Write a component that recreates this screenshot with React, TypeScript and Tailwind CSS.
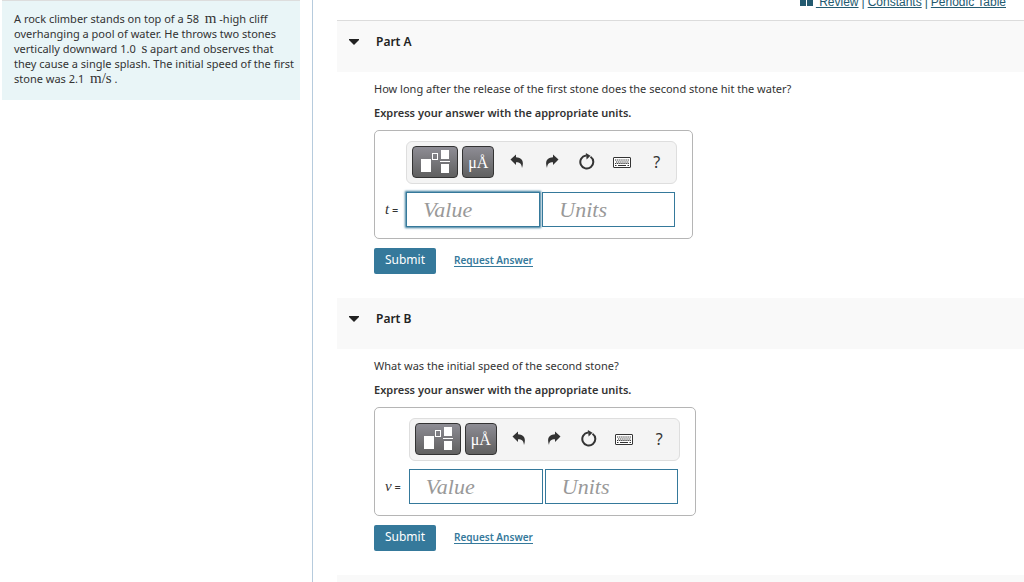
import { ReactNode } from 'react';

interface PartProps {
  title: string;
  question: string;
  variable: string;
  active?: boolean;
  first?: boolean;
}

function TemplatesIcon() {
  return (
    <svg width="30" height="24" viewBox="0 0 30 24" aria-hidden="true">
      <rect x="1" y="9" width="10" height="13" fill="#fff" />
      <rect x="12.5" y="3.5" width="5" height="6" fill="none" stroke="#fff" />
      <rect x="21" y="0" width="8" height="9" fill="#fff" />
      <rect x="20" y="11" width="10" height="1" fill="#fff" />
      <rect x="21" y="14" width="8" height="9" fill="#fff" />
    </svg>
  );
}

function UndoIcon() {
  return (
    <svg width="14" height="16" viewBox="0 0 14 16" aria-hidden="true">
      <path d="M0.5 5.5 L6 0.5 V3.2 C11.5 3.4 14.5 7 12 14 C11.5 9.5 10 8.4 6 8.2 V11 Z" fill="#333" />
    </svg>
  );
}

function RedoIcon() {
  return (
    <svg width="14" height="16" viewBox="0 0 14 16" aria-hidden="true">
      <path d="M13.5 5.5 L8 0.5 V3.2 C2.5 3.4 -0.5 7 2 14 C2.5 9.5 4 8.4 8 8.2 V11 Z" fill="#333" />
    </svg>
  );
}

function ResetIcon() {
  return (
    <svg width="16" height="18" viewBox="0 0 16 18" aria-hidden="true">
      <path d="M11.5 3.7 A6.5 6.5 0 1 1 7 2.6" fill="none" stroke="#333" strokeWidth="2" />
      <path d="M6.8 0 L11.5 2.8 L7.6 6.4 Z" fill="#333" />
    </svg>
  );
}

function KeyboardIcon() {
  return (
    <svg width="18" height="14" viewBox="0 0 18 14" aria-hidden="true">
      <rect x="0.5" y="2.5" width="17" height="10" rx="0.5" fill="#fff" stroke="#333" />
      <path d="M2 5 H16 M3 7 H16" stroke="#333" strokeWidth="1.2" strokeDasharray="1.3 0.8" />
      <path d="M2 8.5 H16" stroke="#333" strokeWidth="1" strokeDasharray="1.3 0.8" />
      <path d="M2 10.5 H3.5 M5 10.5 H13 M14.5 10.5 H16" stroke="#333" strokeWidth="1" />
    </svg>
  );
}

function ToolButton({ label, children }: { label: string; children: ReactNode }) {
  return (
    <button type="button" aria-label={label} className="flex h-8 w-[35px] items-center justify-center text-[#333]">
      {children}
    </button>
  );
}

function Toolbar() {
  return (
    <div className="flex h-[43px] w-[271px] items-start rounded-md border border-[#dedede] bg-[#f4f4f4] pt-1 pl-[5px]">
      <button
        type="button"
        aria-label="Templates"
        className="mr-1 flex h-8 w-[46px] items-center justify-center rounded border border-[#333] bg-linear-to-b from-[#8e8d95] to-[#606060]"
      >
        <TemplatesIcon />
      </button>
      <button
        type="button"
        aria-label="Symbols"
        className="mr-[5px] h-8 w-8 rounded border border-[#333] bg-linear-to-b from-[#8e8d95] to-[#606060] font-['Liberation_Serif',serif] text-[16px] leading-8 text-white"
      >
        μÅ
      </button>
      <ToolButton label="Undo"><UndoIcon /></ToolButton>
      <ToolButton label="Redo"><RedoIcon /></ToolButton>
      <ToolButton label="Reset"><ResetIcon /></ToolButton>
      <ToolButton label="Keyboard shortcuts"><KeyboardIcon /></ToolButton>
      <ToolButton label="Help"><span className="text-base">?</span></ToolButton>
    </div>
  );
}

function PartHeader({ title, first }: { title: string; first?: boolean }) {
  return (
    <h2 className={first ? 'border-t border-[#dcdcdc] bg-[#f9f9f9]' : 'bg-[#f9f9f9]'}>
      <button type="button" className="flex h-[51px] w-full items-start pt-3 pl-3 text-[12px] leading-[18px] font-semibold text-[#222]">
        <svg width="10" height="6" viewBox="0 0 10 6" className="mt-1.5 mr-[17px]" aria-hidden="true">
          <path d="M0 0 H10 V1 L5 6 L0 1 Z" fill="#222" />
        </svg>
        {title}
      </button>
    </h2>
  );
}

function Part({ title, question, variable, active, first }: PartProps) {
  const field =
    "h-[35px] border border-[#35799b] bg-white pl-4 font-['Liberation_Serif',serif] text-[22px] italic outline-none placeholder:text-[#999]";

  return (
    <section>
      <PartHeader title={title} first={first} />
      <div className="pt-2 pb-6 pl-[37px]">
        <p className="text-[11px] leading-[18px]">{question}</p>
        <p className="mt-1.5 text-[11px] leading-[18px] font-semibold">Express your answer with the appropriate units.</p>
        <div className="mt-2 flex h-[109px] w-fit items-start rounded-[5px] border border-[#b5b5b5] pt-2.5 pr-[15px] pl-2.5">
          <label htmlFor={`${variable}-value`} className="mt-[59px] mr-2 text-[11px] leading-[18px]">
            <span className="font-['Liberation_Serif',serif] text-[15px] italic">{variable}</span> =
          </label>
          <div>
            <Toolbar />
            <div className="mt-2 flex gap-0.5">
              <input
                id={`${variable}-value`}
                type="text"
                placeholder="Value"
                className={`${field} w-[134px] ${active ? 'shadow-[0_0_2px_1px_#35799b]' : ''}`}
              />
              <input type="text" aria-label="Units" placeholder="Units" className={`${field} w-[133px]`} />
            </div>
          </div>
        </div>
        <div className="mt-[9px] flex items-start">
          <button type="button" className="h-[26px] w-[62px] rounded-xs bg-[#35799b] pb-0.5 text-[12px] leading-6 text-white">
            Submit
          </button>
          <a href="#" className="mt-1.5 ml-[18px] border-b border-[#35799b] text-[10px] leading-3 font-semibold text-[#35799b]">
            Request Answer
          </a>
        </div>
      </div>
    </section>
  );
}

export default function App() {
  const unit = "font-['Liberation_Serif',serif] text-[15px]";

  return (
    <div className="flex h-screen overflow-hidden bg-white font-['Noto_Sans',sans-serif] text-[#333]">
      <aside className="w-[313px] shrink-0 border-r border-[#b6cbdd] pr-3 pl-0.5">
        <p className="h-[100px] border-t border-[#ddd] bg-[#e9f5f7] pt-2.5 pl-3 text-[11px] leading-[15px] whitespace-nowrap">
          A rock climber stands on top of a 58 &nbsp;<span className={unit}>m</span> -high cliff
          <br />
          overhanging a pool of water. He throws two stones
          <br />
          vertically downward 1.0 &nbsp;<span className={unit}>s</span> apart and observes that
          <br />
          they cause a single splash. The initial speed of the first
          <br />
          stone was 2.1 &nbsp;<span className={unit}>m/s</span> .
        </p>
      </aside>
      <main className="min-w-0 flex-1 pl-6">
        <nav className="-mt-2 flex h-7 items-start justify-end gap-[3px] pr-[18px] font-['Liberation_Sans',sans-serif] text-[12px] leading-5 text-[#235a70]">
          <svg width="13" height="14" viewBox="0 0 13 14" aria-hidden="true">
            <path d="M0 0 H6 V14 H0 Z M7 0 H13 V14 H7 Z" fill="#235a70" />
          </svg>
          <a href="#" className="underline">&nbsp;Review</a>
          <span>|</span>
          <a href="#" className="underline">Constants</a>
          <span>|</span>
          <a href="#" className="underline">Periodic Table</a>
        </nav>
        <Part
          title="Part A"
          question="How long after the release of the first stone does the second stone hit the water?"
          variable="t"
          active
          first
        />
        <Part title="Part B" question="What was the initial speed of the second stone?" variable="v" />
        <PartHeader title="Part C" />
      </main>
    </div>
  );
}
